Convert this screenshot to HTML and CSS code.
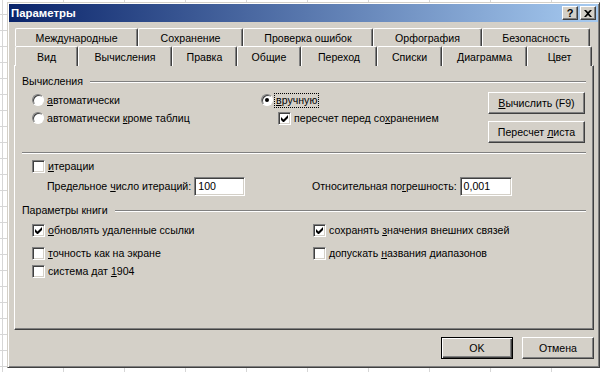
FILE: index.html
```html
<!DOCTYPE html>
<html lang="ru">
<head>
  <meta charset="UTF-8">
  <title>Параметры</title>
  <link rel="stylesheet" href="styles.css">
</head>
<body>
  <div class="dialog">
    <div class="titlebar">
      <span class="title">Параметры</span>
      <span class="caption-btns">
        <span class="cbtn help">?</span>
        <span class="cbtn close">
          <svg width="8" height="7" viewBox="0 0 8 7"><path d="M0 0h2l2 2 2-2h2L5 3.5 8 7H6L4 5 2 7H0l3-3.5z" fill="#000"/></svg>
        </span>
      </span>
    </div>

    <div class="main">
      <div class="tabs">
        <div class="tabrow row-back">
          <div class="tab">Международные</div>
          <div class="tab">Сохранение</div>
          <div class="tab">Проверка ошибок</div>
          <div class="tab">Орфография</div>
          <div class="tab">Безопасность</div>
        </div>
        <div class="tabrow row-front">
          <div class="tab">Вид</div>
          <div class="tab selected">Вычисления</div>
          <div class="tab">Правка</div>
          <div class="tab">Общие</div>
          <div class="tab">Переход</div>
          <div class="tab">Списки</div>
          <div class="tab">Диаграмма</div>
          <div class="tab">Цвет</div>
        </div>
      </div>

      <div class="panel">
        <!-- Вычисления -->
        <div class="legend"><span>Вычисления</span></div>
        <div class="calc">
          <div class="col col-auto">
            <label class="opt"><span class="radio"></span><span><u>а</u>втоматически</span></label>
            <label class="opt"><span class="radio"></span><span>автоматически <u>к</u>роме таблиц</span></label>
          </div>
          <div class="col col-manual">
            <label class="opt"><span class="radio on"></span><span class="focus"><u>в</u>ручную</span></label>
            <label class="opt sub"><span class="check on"><svg width="7" height="7" viewBox="0 0 7 7"><path d="M0 2v3l2 2h1l4-4V0L2.5 4.5z" fill="#000"/></svg></span><span>пересчет перед со<u>х</u>ранением</span></label>
          </div>
          <div class="col col-btns">
            <span class="btn"><span><u>В</u>ычислить (F9)</span></span>
            <span class="btn"><span>Пересчет <u>л</u>иста</span></span>
          </div>
        </div>

        <div class="sep"></div>

        <div class="iter">
          <label class="opt"><span class="check"></span><span><u>и</u>терации</span></label>
          <div class="iter-fields">
            <div class="field-row limit"><span>Предельное <u>ч</u>исло итераций:</span><span class="field w-limit">100</span></div>
            <div class="field-row"><span>Относительная по<u>г</u>решность:</span><span class="field w-eps">0,001</span></div>
          </div>
        </div>

        <!-- Параметры книги -->
        <div class="legend book"><span>Параметры книги</span></div>
        <div class="book-opts">
          <label class="opt"><span class="check on"><svg width="7" height="7" viewBox="0 0 7 7"><path d="M0 2v3l2 2h1l4-4V0L2.5 4.5z" fill="#000"/></svg></span><span><u>о</u>бновлять удаленные ссылки</span></label>
          <label class="opt"><span class="check on"><svg width="7" height="7" viewBox="0 0 7 7"><path d="M0 2v3l2 2h1l4-4V0L2.5 4.5z" fill="#000"/></svg></span><span>сохранять <u>з</u>начения внешних связей</span></label>
          <label class="opt gap-top"><span class="check"></span><span><u>т</u>очность как на экране</span></label>
          <label class="opt gap-top"><span class="check"></span><span>допускать <u>н</u>азвания диапазонов</span></label>
          <label class="opt"><span class="check"></span><span>система дат <u>1</u>904</span></label>
        </div>
      </div>

      <div class="footer">
        <span class="btn default">OK</span>
        <span class="btn">Отмена</span>
      </div>
    </div>
  </div>
</body>
</html>
```

FILE: styles.css
```css
body {
  margin: 0;
  height: 372px;
  overflow: hidden;
  font-family: 'Liberation Sans', Arial, sans-serif;
  font-size: 10.6px;
  line-height: 13px;
  color: #000;
  background-color: #fff;
  background-image:
    linear-gradient(to right, #d6d6d6 1px, transparent 1px),
    linear-gradient(to bottom, #d6d6d6 1px, transparent 1px);
  background-size: 61px 16px;
  background-position: 2px 14px;
}

u {
  text-decoration: underline;
  text-underline-offset: 1px;
}

/* Окно */
.dialog {
  box-sizing: border-box;
  width: 593px;
  height: 366px;
  margin: 2px 0 0 7px;
  padding: 1px;
  background: #d4d0c8;
  border: 1px solid;
  border-color: #d4d0c8 #404040 #404040 #d4d0c8;
  box-shadow: inset 1px 1px #fff, inset -1px -1px #808080;
}

.titlebar {
  height: 18px;
  display: flex;
  align-items: center;
  justify-content: space-between;
  padding: 0 2px 0 2px;
  background: linear-gradient(to right, #0a246a, #a6caf0);
}

.title {
  color: #fff;
  font-weight: bold;
  font-size: 11.4px;
}

.caption-btns {
  display: flex;
  gap: 2px;
}

.cbtn {
  box-sizing: border-box;
  width: 16px;
  height: 14px;
  display: flex;
  align-items: center;
  justify-content: center;
  background: #d4d0c8;
  border: 1px solid;
  border-color: #fff #404040 #404040 #fff;
  box-shadow: inset -1px -1px #808080;
  font-weight: bold;
  font-size: 11px;
}

.main {
  padding: 6px 4px 0 5px;
}

/* Вкладки */
.tabrow {
  display: grid;
  margin-left: 1px;
}

.row-back {
  height: 18px;
  grid-template-columns: 123px 105px 130px 109px 108px;
}

.row-front {
  height: 19px;
  grid-template-columns: 63px 94px 65px 64px 76px 65px 85px 65px;
}

.tab {
  box-sizing: border-box;
  display: flex;
  align-items: center;
  justify-content: center;
  background: #d4d0c8;
  border-top: 1px solid #fff;
  border-left: 1px solid #fff;
  border-right: 1px solid #404040;
  border-radius: 2px 2px 0 0;
  box-shadow: inset -1px 0 #808080;
  padding-top: 1px;
}

.tab.selected {
  position: relative;
  z-index: 1;
  height: 20px;
}

/* Панель */
.panel {
  box-sizing: border-box;
  height: 265px;
  padding: 9px 7px 0 7px;
  border: 1px solid;
  border-color: #fff #404040 #404040 #fff;
  box-shadow: inset -1px -1px #808080;
}

.legend {
  display: flex;
  align-items: center;
  gap: 7px;
  height: 13px;
}

.legend::after {
  content: "";
  flex: 1;
  border-top: 1px solid #808080;
  border-bottom: 1px solid #fff;
}

.legend.book {
  margin-top: 8px;
}

.opt {
  display: flex;
  align-items: center;
  gap: 3px;
  height: 18px;
  white-space: nowrap;
}

.radio {
  box-sizing: border-box;
  position: relative;
  width: 12px;
  height: 12px;
  border-radius: 50%;
  background: #fff;
  border: 1px solid;
  border-color: #808080 #fff #fff #808080;
  box-shadow: inset 1px 1px #404040;
}

.radio.on::after {
  content: "";
  position: absolute;
  left: 3px;
  top: 3px;
  width: 4px;
  height: 4px;
  border-radius: 50%;
  background: #000;
}

.check {
  box-sizing: border-box;
  width: 13px;
  height: 13px;
  display: flex;
  align-items: center;
  justify-content: center;
  background: #fff;
  border: 1px solid;
  border-color: #808080 #fff #fff #808080;
  box-shadow: inset 1px 1px #404040, inset -1px -1px #d4d0c8;
}

.focus {
  outline: 1px dotted #000;
  outline-offset: 0;
  padding: 0 1px;
  margin-left: -1px;
}

.calc {
  display: flex;
  margin-top: 3px;
  height: 52px;
}

.col-auto {
  width: 229px;
  margin-left: 10px;
}

.col-manual {
  width: 227px;
}

.opt.sub {
  margin-left: 17px;
}

.col-btns {
  display: flex;
  flex-direction: column;
  gap: 7px;
  padding-top: 1px;
}

.btn {
  box-sizing: border-box;
  display: flex;
  align-items: center;
  justify-content: center;
  width: 97px;
  height: 22px;
  background: #d4d0c8;
  border: 1px solid;
  border-color: #fff #404040 #404040 #fff;
  box-shadow: inset -1px -1px #808080;
  white-space: nowrap;
}

.sep {
  margin-top: 9px;
  border-top: 1px solid #808080;
  border-bottom: 1px solid #fff;
}

.iter {
  padding: 3px 0 0 10px;
}

.iter-fields {
  display: flex;
  margin-top: 2px;
  padding-left: 15px;
}

.field-row {
  display: flex;
  align-items: center;
  gap: 3px;
  height: 19px;
  white-space: nowrap;
}

.field-row.limit {
  width: 265px;
}

.field {
  box-sizing: border-box;
  height: 19px;
  display: flex;
  align-items: center;
  padding-left: 3px;
  background: #fff;
  border: 1px solid;
  border-color: #808080 #fff #fff #808080;
  box-shadow: inset 1px 1px #404040, inset -1px -1px #d4d0c8;
}

.w-limit { width: 51px; }
.w-eps { width: 52px; }

.book-opts {
  display: grid;
  grid-template-columns: 281px auto;
  margin: 4px 0 0 10px;
}

.opt.gap-top {
  margin-top: 5px;
}

/* Кнопки внизу */
.footer {
  display: flex;
  justify-content: flex-end;
  gap: 9px;
  margin-top: 7px;
}

.footer .btn {
  width: 72px;
}

.btn.default {
  border: 1px solid #000;
  box-shadow: inset 1px 1px #fff, inset -1px -1px #404040, inset -2px -2px #808080;
}
```
